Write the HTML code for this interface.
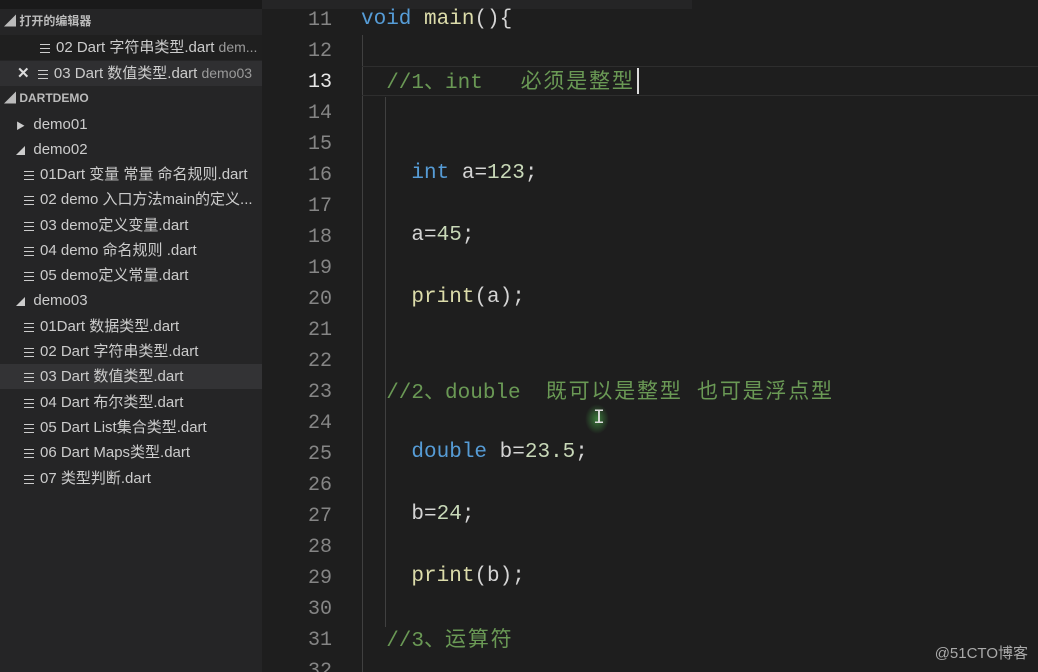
<!DOCTYPE html>
<html><head><meta charset="utf-8"><style>
html,body{margin:0;width:1038px;height:672px;overflow:hidden}
body{background:#1e1e1e;position:relative;font-family:"Liberation Sans","Noto Sans CJK SC",sans-serif}
*{box-sizing:border-box}
#sb{position:absolute;left:0;top:0;width:262px;height:672px;background:#252526;overflow:hidden}
#top{position:absolute;left:0;top:0;width:262px;height:9px;background:#1a1a1a}
.r{position:absolute;left:0;width:262px;height:25px;line-height:25px;font-size:15px;color:#cccccc;white-space:nowrap;overflow:hidden}
.h{font-size:12px;font-weight:bold;color:#bbbbbb}
.ic{display:inline-block;width:10px;height:9px;margin-right:6px;vertical-align:-1px;background:linear-gradient(#ccc 0 1px,transparent 1px 4px,#ccc 4px 5px,transparent 5px 8px,#ccc 8px 9px) no-repeat;background-size:10px 9px}
.d{color:#9a9a9a;font-size:14px}
#ed{position:absolute;left:262px;top:0;right:0;bottom:0;overflow:hidden}
.ln{position:absolute;left:0;width:70px;text-align:right;font:20px "Liberation Mono",monospace;color:#858585}
.c{position:absolute;left:99px;font:21px "Liberation Mono","Noto Sans CJK SC",monospace;color:#d4d4d4;white-space:pre;line-height:26px}
.cj{letter-spacing:1.8px}
.k{color:#569cd6}.f{color:#dcdcaa}.n{color:#c8d8b8}.cm{color:#6a9955}
</style></head><body>
<div id="sb">
<div id="top"></div>
<div class="r h" style="top:9px;padding-left:4px">◢ 打开的编辑器</div>
<div class="r" style="top:35px;background:#1f1f1f;padding-left:40px"><span class="ic"></span>02 Dart 字符串类型.dart <span class="d">dem...</span></div>
<div class="r" style="top:61px;background:#2f2f31;padding-left:17px"><b style="color:#ddd">✕</b>&nbsp;&nbsp;<span class="ic"></span>03 Dart 数值类型.dart <span class="d">demo03</span></div>
<div class="r h" style="top:86px;padding-left:4px">◢ DARTDEMO</div>
<div class="r" style="top:112px;padding-left:16px"><span style="font-size:9px">▶</span>&nbsp;&nbsp;demo01</div>
<div class="r" style="top:137px;padding-left:16px"><span style="font-size:9px">◢</span>&nbsp;&nbsp;demo02</div>
<div class="r" style="top:162px;padding-left:24px"><span class="ic"></span>01Dart 变量 常量 命名规则.dart</div>
<div class="r" style="top:187px;padding-left:24px"><span class="ic"></span>02 demo 入口方法main的定义...</div>
<div class="r" style="top:213px;padding-left:24px"><span class="ic"></span>03 demo定义变量.dart</div>
<div class="r" style="top:238px;padding-left:24px"><span class="ic"></span>04 demo 命名规则 .dart</div>
<div class="r" style="top:263px;padding-left:24px"><span class="ic"></span>05 demo定义常量.dart</div>
<div class="r" style="top:288px;padding-left:16px"><span style="font-size:9px">◢</span>&nbsp;&nbsp;demo03</div>
<div class="r" style="top:314px;padding-left:24px"><span class="ic"></span>01Dart 数据类型.dart</div>
<div class="r" style="top:339px;padding-left:24px"><span class="ic"></span>02 Dart 字符串类型.dart</div>
<div class="r" style="top:364px;padding-left:24px;background:#333335"><span class="ic"></span>03 Dart 数值类型.dart</div>
<div class="r" style="top:390px;padding-left:24px"><span class="ic"></span>04 Dart 布尔类型.dart</div>
<div class="r" style="top:415px;padding-left:24px"><span class="ic"></span>05 Dart List集合类型.dart</div>
<div class="r" style="top:440px;padding-left:24px"><span class="ic"></span>06 Dart Maps类型.dart</div>
<div class="r" style="top:466px;padding-left:24px"><span class="ic"></span>07 类型判断.dart</div>
</div>
<div id="ed">
<div style="position:absolute;left:0;top:0;width:430px;height:9px;background:#252526"></div>
<div style="position:absolute;left:100px;top:35px;width:1px;height:637px;background:#404040"></div>
<div style="position:absolute;left:123px;top:97px;width:1px;height:530px;background:#404040"></div>
<div style="position:absolute;left:100px;top:66px;right:0;height:30px;border-top:1px solid #2e2e2e;border-bottom:1px solid #2e2e2e"></div>
<div style="position:absolute;left:375px;top:68px;width:2px;height:26px;background:#ddd"></div>
<div style="position:absolute;left:323px;top:404px;width:24px;height:30px;border-radius:50%;background:radial-gradient(#3a7a3a,transparent 70%)"></div>
<div style="position:absolute;left:331px;top:407px;color:#ddd;font:20px 'Liberation Mono'">I</div>
<div class="ln" style="top:9px">11</div><div class="c" style="top:7px"><span class="k">void</span> <span class="f">main</span>(){</div>
<div class="ln" style="top:40px">12</div>
<div class="ln" style="top:71px;color:#e6e6e6">13</div><div class="c cm" style="top:71px">  //1、int   <span class="cj">必须是整型</span></div>
<div class="ln" style="top:102px">14</div>
<div class="ln" style="top:133px">15</div>
<div class="ln" style="top:164px">16</div><div class="c" style="top:161px">    <span class="k">int</span> a=<span class="n">123</span>;</div>
<div class="ln" style="top:195px">17</div>
<div class="ln" style="top:226px">18</div><div class="c" style="top:223px">    a=<span class="n">45</span>;</div>
<div class="ln" style="top:257px">19</div>
<div class="ln" style="top:288px">20</div><div class="c" style="top:285px">    <span class="f">print</span>(a);</div>
<div class="ln" style="top:319px">21</div>
<div class="ln" style="top:350px">22</div>
<div class="ln" style="top:381px">23</div><div class="c cm" style="top:381px">  //2、double  <span class="cj">既可以是整型 也可是浮点型</span></div>
<div class="ln" style="top:412px">24</div>
<div class="ln" style="top:443px">25</div><div class="c" style="top:440px">    <span class="k">double</span> b=<span class="n">23.5</span>;</div>
<div class="ln" style="top:474px">26</div>
<div class="ln" style="top:505px">27</div><div class="c" style="top:502px">    b=<span class="n">24</span>;</div>
<div class="ln" style="top:536px">28</div>
<div class="ln" style="top:567px">29</div><div class="c" style="top:564px">    <span class="f">print</span>(b);</div>
<div class="ln" style="top:598px">30</div>
<div class="ln" style="top:629px">31</div><div class="c cm" style="top:629px">  //3、<span class="cj">运算符</span></div>
<div class="ln" style="top:660px">32</div>
</div>
<div style="position:absolute;right:10px;top:642px;color:#aaa;font-size:15px">@51CTO博客</div>
</body></html>
